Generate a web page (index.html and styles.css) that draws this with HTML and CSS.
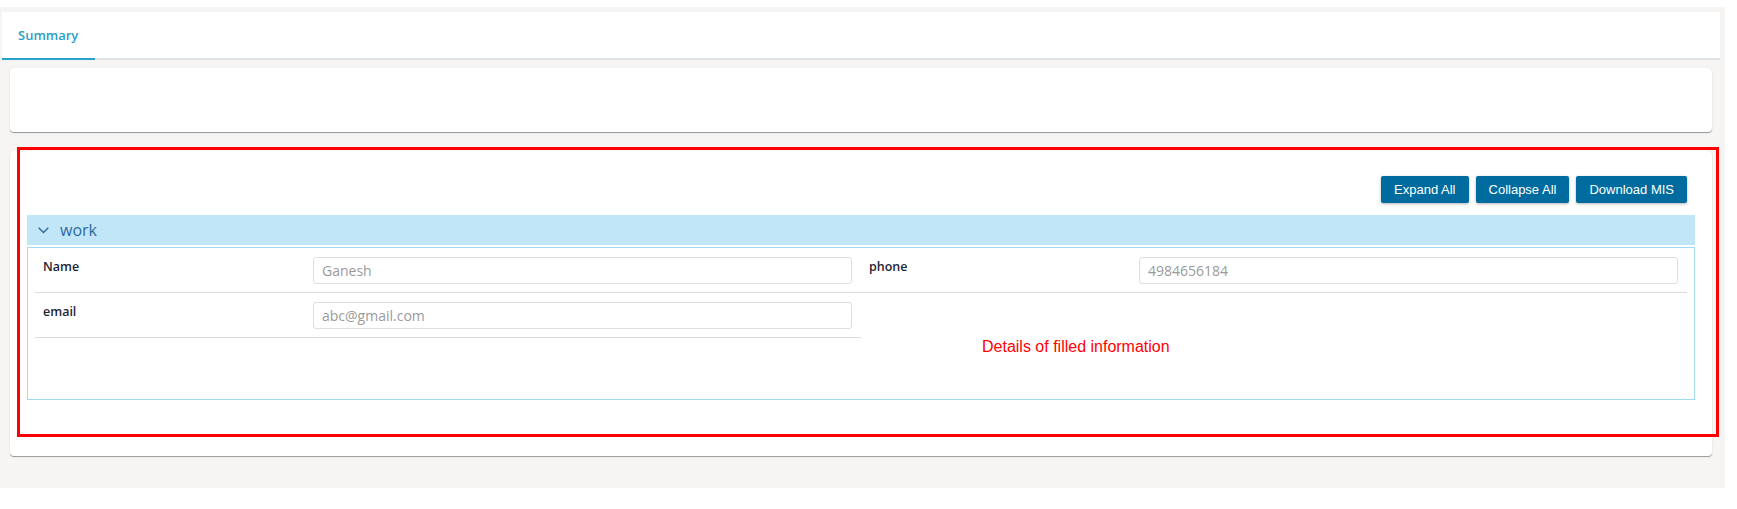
FILE: index.html
```html
<!DOCTYPE html>
<html lang="en">
<head>
<meta charset="utf-8">
<title>Summary</title>
<link rel="stylesheet" href="styles.css">
</head>
<body>
<div class="page">
  <div class="tabs">
    <div class="tab">Summary</div>
  </div>

  <div class="card card-top"></div>

  <div class="card card-main">
    <div class="annotation-box"></div>
    <div class="toolbar">
      <button class="btn">Expand All</button>
      <button class="btn">Collapse All</button>
      <button class="btn">Download MIS</button>
    </div>

    <div class="acc-header">
      <svg class="chevron" width="11" height="7" viewBox="0 0 11 7"><polyline points="0.7,0.8 5.5,5.6 10.3,0.8" fill="none" stroke="#2f6a9e" stroke-width="1.4"/></svg>
      <span class="acc-title">work</span>
    </div>

    <div class="acc-body">
      <div class="col">
        <div class="row">
          <div class="label">Name</div>
          <div class="field"><div class="input">Ganesh</div></div>
        </div>
        <div class="row">
          <div class="label">email</div>
          <div class="field"><div class="input">abc@gmail.com</div></div>
        </div>
      </div>
      <div class="col">
        <div class="row">
          <div class="label">phone</div>
          <div class="field"><div class="input">4984656184</div></div>
        </div>
      </div>
      <div class="annotation-text">Details of filled information</div>
    </div>
  </div>
</div>
</body>
</html>
```

FILE: styles.css
```css
html, body {
  margin: 0;
  padding: 0;
  background: #ffffff;
  font-family: "Open Sans", "Noto Sans", sans-serif;
}

.page {
  width: 1725px;
  margin-top: 7px;
  padding: 5px 0 32px 2px;
  box-sizing: border-box;
  background: #f6f5f3;
}

.tabs {
  width: 1718px;
  height: 48px;
  box-sizing: border-box;
  background: #ffffff;
  border-bottom: 2px solid #dfe2e6;
  display: flex;
}

.tab {
  width: 93px;
  height: 48px;
  box-sizing: border-box;
  padding-left: 16px;
  line-height: 46px;
  font-size: 13px;
  font-weight: 600;
  color: #2a9fc8;
  border-bottom: 2px solid #27a2ca;
  margin-bottom: -2px;
}

.card {
  width: 1702px;
  margin-left: 8px;
  box-sizing: border-box;
  background: #ffffff;
  border-radius: 4px;
  box-shadow: 0 1px 1px rgba(0, 0, 0, 0.38), 0 0 1px rgba(0, 0, 0, 0.08);
}

.card-top {
  margin-top: 8px;
  height: 64px;
}

.card-main {
  position: relative;
  margin-top: 19px;
  padding: 25px 17px 56px 17px;
}

.annotation-box {
  position: absolute;
  left: 7px;
  top: -4px;
  width: 1702px;
  height: 290px;
  box-sizing: border-box;
  border: 3px solid #ff0000;
  pointer-events: none;
}

.toolbar {
  display: flex;
  justify-content: flex-end;
  gap: 7px;
  padding-right: 8px;
  height: 27px;
}

.btn {
  height: 27px;
  padding: 0 13px;
  border: none;
  border-radius: 2px;
  background: #006b9e;
  color: #ffffff;
  font-family: "Liberation Sans", Arial, sans-serif;
  font-size: 13px;
  box-shadow: 0 1px 3px rgba(0, 0, 0, 0.3);
}

.acc-header {
  margin-top: 12px;
  height: 30px;
  background: #c0e6f7;
  display: flex;
  align-items: center;
  padding-left: 11px;
}

.chevron {
  display: block;
  margin-top: 1px;
}

.acc-title {
  margin-left: 11px;
  font-size: 16px;
  color: #2f6a9e;
  line-height: 30px;
}

.acc-body {
  position: relative;
  margin-top: 2px;
  min-height: 151px;
  border: 1px solid #9fdbf4;
  padding: 0 7px;
  display: grid;
  grid-template-columns: 1fr 1fr;
  align-items: start;
}

.row {
  display: flex;
  align-items: flex-start;
  padding: 9px 9px 8px 0;
  border-bottom: 1px solid #dcdcdc;
}

.label {
  width: 270px;
  padding-left: 8px;
  margin-top: 1px;
  font-size: 12.5px;
  font-weight: 600;
  line-height: 17px;
  color: #1d2535;
}

.field {
  flex: 1;
}

.input {
  height: 27px;
  box-sizing: border-box;
  border: 1px solid #dedede;
  border-radius: 3px;
  padding-left: 8px;
  font-size: 14px;
  line-height: 25px;
  color: #9a9a9a;
}

.annotation-text {
  position: absolute;
  left: 954px;
  top: 90px;
  font-family: "Liberation Sans", Arial, sans-serif;
  font-size: 16px;
  line-height: 18px;
  color: #ff0000;
}
```
